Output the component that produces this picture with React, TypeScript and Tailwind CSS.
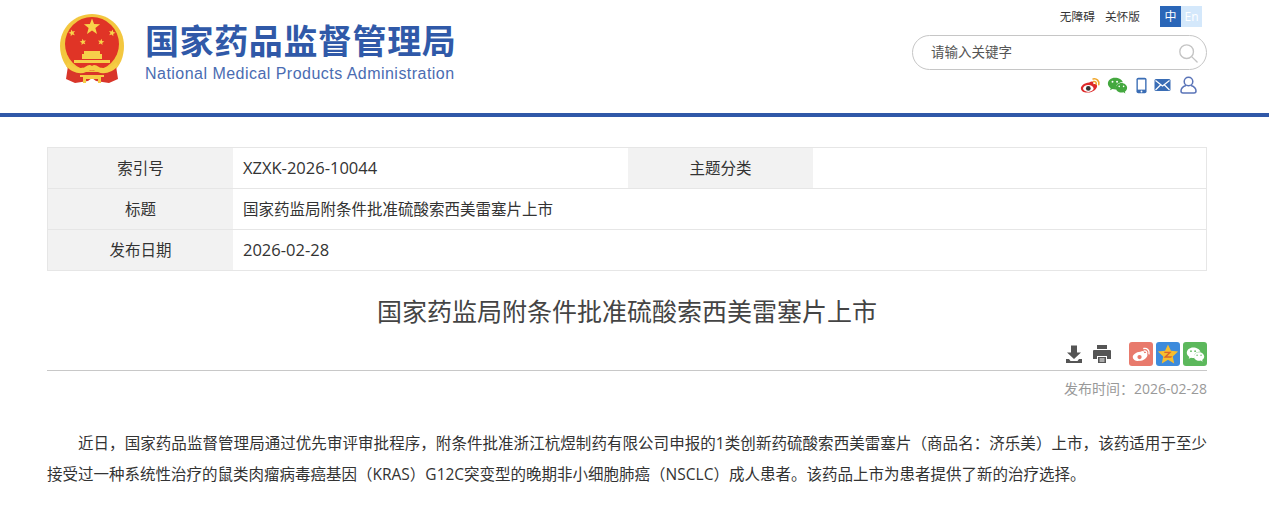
import React from "react";

const cjk = { fontFamily: '"Open Sans", "Noto Sans CJK SC", sans-serif' };

function Emblem() {
  const star = (cx: number, cy: number, r: number, rot = 0) => {
    const pts: string[] = [];
    for (let i = 0; i < 10; i++) {
      const rad = i % 2 === 0 ? r : r * 0.42;
      const a = ((-90 + rot + i * 36) * Math.PI) / 180;
      pts.push(`${(cx + rad * Math.cos(a)).toFixed(2)},${(cy + rad * Math.sin(a)).toFixed(2)}`);
    }
    return <polygon points={pts.join(" ")} fill="#f8d44a" />;
  };
  return (
    <svg width="66" height="72" viewBox="0 0 66 72" className="shrink-0">
      <path d="M33 1C15 1 1 15 1 33c0 11 5 20 11 26h42c7-6 11-15 11-26C65 15 51 1 33 1z" fill="#f3c73f" />
      <circle cx="33" cy="31" r="27" fill="#e03426" />
      <path d="M9 53l-2 13 9 4 13-2 4-3 4 3 13 2 9-4-2-13-14 6H23z" fill="#d9352a" />
      {star(33, 14, 8.500)}
      {star(13, 20, 3.600, -15)}
      {star(53, 20, 3.600, 15)}
      {star(24, 29, 3.400, -10)}
      {star(42, 29, 3.400, 10)}
      <path d="M25 38h16v3h2v5H23v-5h2z" fill="#f6d04a" />
      <path d="M15 47h36v3H15z" fill="#f6d04a" />
      <path d="M9 49c5 6 14 7 17 5 3-2 5-3 7-1 2-2 4-1 7 1 3 2 12 1 17-5l2 4c-5 6-14 9-20 6-3-1-5-2-6-1-1-1-3 0-6 1-6 3-15 0-20-6z" fill="#f6cd45" />
      <path d="M21 62h24v2h-3v6h-3v-4H27v4h-3v-6h-3z" fill="#f6cd45" />
    </svg>
  );
}

function Weibo({ size = 20, fill = "#dd2a2a", wave = "#f0a62a", eye = "#333" }: { size?: number; fill?: string; wave?: string; eye?: string }) {
  return (
    <svg width={size} height={size} viewBox="0 0 24 24">
      <path d="M10.500 8.500c2.500-1.400 4.500-1.300 4.800.3.100.6 0 1.200-.2 1.700 1.700-.6 4.400-.4 4.400 2 0 3.500-5 7.500-10.500 7.500C5 20.500 1 18.400 1 15c0-2.500 4-6.300 9.500-6.500z" fill={fill} />
      <ellipse cx="9.500" cy="15.300" rx="6" ry="4" fill="#fff" />
      <circle cx="9.500" cy="15.300" r="2.700" fill={eye} />
      <path d="M15 4.500c4-1 7.500 2.500 6.500 6.500M15.500 7.500c2-.5 3.500 1 3 3" fill="none" stroke={wave} strokeWidth="1.800" strokeLinecap="round" />
    </svg>
  );
}

function Wechat({ size = 20, fill = "#44a83f", hole = "#fff" }: { size?: number; fill?: string; hole?: string }) {
  return (
    <svg width={size} height={size} viewBox="0 0 24 24">
      <path d="M9 3C4.600 3 1 6 1 9.700c0 2.200 1.200 4 3.200 5.300l-.8 2.500 2.900-1.500c1.200.3 2.200.5 3.400.5h.8c-.2-.6-.3-1.200-.3-1.900 0-3.400 3.200-6.200 7.300-6.200h.7C17.300 5.200 13.500 3 9 3z" fill={fill} />
      <path d="M23 14.500c0-3-3-5.500-6.500-5.500S10 11.500 10 14.500 13 20 16.500 20c.8 0 1.500-.1 2.200-.3l2.300 1.300-.6-2c1.600-1.100 2.600-2.700 2.600-4.500z" fill={fill} />
      <circle cx="6.300" cy="7.800" r="1.100" fill={hole} />
      <circle cx="11.500" cy="7.800" r="1.100" fill={hole} />
      <circle cx="14" cy="13" r=".9" fill={hole} />
      <circle cx="19" cy="13" r=".9" fill={hole} />
    </svg>
  );
}

function Row({ label, children, extra }: { label: string; children: React.ReactNode; extra?: boolean }) {
  return (
    <div className="flex h-[41px] border-b border-[#e6e6e6] last:h-[40px] last:border-b-0">
      <div className="flex w-[185px] items-center justify-center bg-[#f2f2f2] pt-[1px]">{label}</div>
      <div className={`flex items-center pl-[10px] pt-[1px] ${extra ? "w-[395px]" : "flex-1"}`}>{children}</div>
      {extra && (
        <>
          <div className="flex w-[185px] items-center justify-center bg-[#f2f2f2] pt-[1px]">主题分类</div>
          <div className="flex-1" />
        </>
      )}
    </div>
  );
}

export default function App() {
  return (
    <div className="h-[514px] w-[1269px] overflow-hidden bg-white text-[#333]" style={cjk}>
      <header className="relative flex h-[113px] justify-between pl-[59px] pr-[62px]">
        <div className="flex items-start pt-[13px]">
          <Emblem />
          <div className="ml-[20px] flex flex-col">
            <div className="mt-[6px] whitespace-nowrap text-[34px] leading-[44px] font-bold tracking-[0.6px] text-[#3059a8]">国家药品监督管理局</div>
            <div className="mt-[1px] whitespace-nowrap text-[16px] leading-[20px] tracking-[0.47px] text-[#4a6cb2]" style={{ fontFamily: '"Liberation Sans", sans-serif' }}>National Medical Products Administration</div>
          </div>
        </div>
        <div className="flex w-[295px] flex-col items-end">
          <div className="mt-[6px] mr-[5px] flex items-center">
            <span className="text-[11.700px] leading-[21px] text-[#333]">无障碍</span>
            <span className="ml-[10px] text-[11.700px] leading-[21px] text-[#333]">关怀版</span>
            <div className="ml-[20px] flex h-[21px] text-[12px] text-white">
              <span className="flex w-[21px] items-center justify-center bg-[#2a66b8]">中</span>
              <span className="flex w-[21px] items-center justify-center bg-[#d4e8fb]">En</span>
            </div>
          </div>
          <div className="mt-[8px] flex h-[35px] w-[295px] items-center justify-between rounded-[18px] border border-[#c6c6c6] pl-[18px] pr-[8px] text-[13.500px] text-[#555]">
            <span>请输入关键字</span>
            <svg width="20" height="20" viewBox="0 0 22 22" fill="none" stroke="#c4c4c4" strokeWidth="1.500">
              <circle cx="9.500" cy="9.500" r="7.500" />
              <path d="M15 15L21 21" strokeLinecap="round" />
            </svg>
          </div>
          <div className="mt-[3px] flex h-[24px] items-center pr-[10px]">
            <Weibo size={21} />
            <span className="ml-[6px]"><Wechat size={21} /></span>
            <svg width="11" height="17" viewBox="0 0 12 18" className="ml-[8px]">
              <rect x="0.500" y="0.500" width="11" height="17" rx="2" fill="#3a6db5" />
              <rect x="2" y="2.500" width="8" height="11" fill="#fff" />
              <circle cx="6" cy="15.500" r="1" fill="#fff" />
            </svg>
            <svg width="17" height="12" viewBox="0 0 16 12" className="ml-[7px]">
              <rect width="16" height="12" rx="1.500" fill="#3a6db5" />
              <path d="M1 1.500l7 5.500 7-5.500M1 11l5-5M15 11l-5-5" stroke="#fff" strokeWidth="1.200" fill="none" />
            </svg>
            <svg width="17" height="18" viewBox="0 0 17 18" fill="none" stroke="#5a74b8" strokeWidth="1.500" className="ml-[9px]">
              <circle cx="8.500" cy="5.500" r="4.300" />
              <path d="M6 9.500C3 10.500 1 12.500 1 15c0 1.500 1 2 2 2h11c1 0 2-.5 2-2 0-2.500-2-4.500-5-5.500" />
            </svg>
          </div>
        </div>
      </header>
      <div className="h-[4px] bg-[#3058a8]" />
      <main className="mx-[47px] mt-[30px] w-[1160px]">
        <div className="border border-[#e6e6e6] text-[15.500px] text-[#333]">
          <Row label="索引号" extra><span className="text-[16.500px]">XZXK-2026-10044</span></Row>
          <Row label="标题">国家药监局附条件批准硫酸索西美雷塞片上市</Row>
          <Row label="发布日期"><span className="text-[16.500px]">2026-02-28</span></Row>
        </div>
        <h1 className="mt-[22px] text-center text-[25px] leading-[36px] font-normal text-[#444]">国家药监局附条件批准硫酸索西美雷塞片上市</h1>
        <div className="mt-[13px] box-content flex h-[24px] items-center justify-end gap-[3px] border-b border-[#c8c8c8] pb-[4px]">
          <svg width="20" height="20" viewBox="0 0 20 20" fill="#555">
            <path d="M7 1.500h6v7h4l-7 6.500-7-6.500h4z" />
            <path d="M2 15h3l1.500 2h7L15 15h3v4H2z" />
          </svg>
          <svg width="20" height="20" viewBox="0 0 20 20" fill="#555" className="ml-[5px]">
            <path d="M5 1h10v4H5z" />
            <path d="M2 6h16a1 1 0 0 1 1 1v8h-4v-3H5v3H1V7a1 1 0 0 1 1-1z" />
            <path d="M6 13h8v6H6z" />
            <rect x="7.500" y="14.500" width="5" height="1" fill="#fff" />
            <rect x="7.500" y="16.500" width="5" height="1" fill="#fff" />
          </svg>
          <span className="ml-[14px] flex h-[24px] w-[24px] items-center justify-center rounded-[3px] bg-[#e87a6c]">
            <Weibo size={19} fill="#fff" wave="#fff" eye="#e87a6c" />
          </span>
          <span className="flex h-[24px] w-[24px] items-center justify-center rounded-[3px] bg-[#3d8bdc]">
            <svg width="22" height="22" viewBox="0 0 24 24">
              <path d="M12 1.500l3.200 7 7.800.9-5.800 5.200 1.600 7.700L12 18.400l-6.800 3.900 1.600-7.700L1 9.400l7.800-.9z" fill="#f6bd2e" />
              <path d="M8 9.500h8l-5 5h5.500l-1 1.500H7l5.300-5H8z" fill="#d9662a" />
            </svg>
          </span>
          <span className="flex h-[24px] w-[24px] items-center justify-center rounded-[3px] bg-[#5cb85c]">
            <Wechat size={19} fill="#fff" hole="#5cb85c" />
          </span>
        </div>
        <div className="mt-[8px] text-right text-[14px] leading-[20px] text-[#999]">发布时间：2026-02-28</div>
        <div className="mt-[29px] text-justify text-[15.500px] leading-[31px] text-[#333] indent-[31px]">
          近日，国家药品监督管理局通过优先审评审批程序，附条件批准浙江杭煜制药有限公司申报的1类创新药硫酸索西美雷塞片（商品名：济乐美）上市，该药适用于至少接受过一种系统性治疗的鼠类肉瘤病毒癌基因（KRAS）G12C突变型的晚期非小细胞肺癌（NSCLC）成人患者。该药品上市为患者提供了新的治疗选择。
        </div>
      </main>
    </div>
  );
}
